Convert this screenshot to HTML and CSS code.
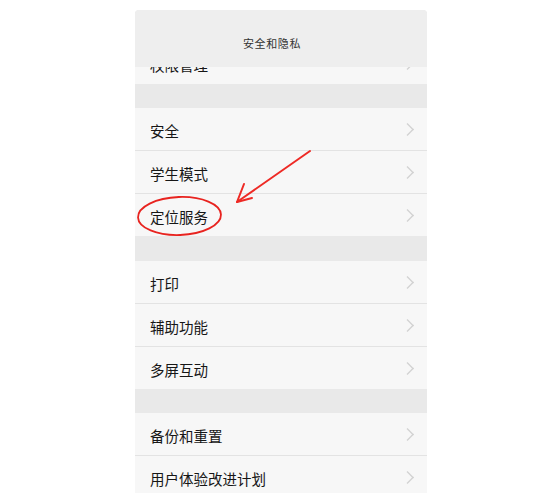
FILE: index.html
```html
<!DOCTYPE html>
<html lang="zh-CN">
<head>
    <meta charset="UTF-8">
    <meta name="viewport" content="width=device-width, initial-scale=1.0">
    <title>安全和隐私</title>
    <link rel="stylesheet" href="styles.css">
</head>
<body>

    <div class="stage">
        <div class="phone">
            <header class="top-bar">
                <h1 class="top-title">安全和隐私</h1>
            </header>

            <div class="settings">
                <section class="group">
                    <div class="row">权限管理<span class="chev"></span></div>
                </section>

                <section class="group">
                    <div class="row">安全<span class="chev"></span></div>
                    <div class="row">学生模式<span class="chev"></span></div>
                    <div class="row">定位服务<span class="chev"></span></div>
                </section>

                <section class="group">
                    <div class="row">打印<span class="chev"></span></div>
                    <div class="row">辅助功能<span class="chev"></span></div>
                    <div class="row">多屏互动<span class="chev"></span></div>
                </section>

                <section class="group">
                    <div class="row">备份和重置<span class="chev"></span></div>
                    <div class="row">用户体验改进计划<span class="chev"></span></div>
                </section>
            </div>
        </div>

        <!-- red pen marks drawn over the screenshot -->
        <svg class="marks" viewBox="0 0 554 501" width="554" height="501">
            <ellipse cx="179.5" cy="216" rx="41.5" ry="19" fill="none" stroke="#e8231f" stroke-width="1.8" transform="rotate(-2 179.5 216)"/>
            <path d="M310 151 L237 202" fill="none" stroke="#ee2a25" stroke-width="2" stroke-linecap="round"/>
            <path d="M244 184 L237 202 L252 198" fill="none" stroke="#ee2a25" stroke-width="2" stroke-linecap="round" stroke-linejoin="round"/>
        </svg>
    </div>

</body>
</html>
```

FILE: styles.css
```css
body {
    margin: 0;
    background-color: #ffffff;
    font-family: "Noto Sans CJK SC", "Noto Sans", sans-serif;
    color: #161616;
}

.stage {
    position: relative;
    width: 554px;
    height: 501px;
    overflow: hidden;
}

.phone {
    margin: 10px 0 0 135px;
    width: 292px;
    height: 483px;
    background-color: #e9e9e9;
    border-radius: 4px 4px 0 0;
    overflow: hidden;
}

.top-bar {
    position: relative;
    z-index: 1;
    height: 57px;
    padding: 26px 18px 0 0;
    box-sizing: border-box;
    background-color: #eeeeee;
    text-align: center;
}

.top-title {
    margin: 0;
    font-size: 11px;
    line-height: 14px;
    font-weight: normal;
    letter-spacing: 0.6px;
    color: #333333;
}

.settings {
    margin-top: -25px;
    display: flex;
    flex-direction: column;
    gap: 24px;
}

.group {
    background-color: #f7f7f7;
}

.group:nth-child(3) {
    margin-top: 1px;
}

.row {
    height: 43px;
    padding: 3px 13px 0 15px;
    box-sizing: border-box;
    display: flex;
    align-items: center;
    justify-content: space-between;
    font-size: 14.5px;
    border-bottom: 1px solid #e3e3e3;
}

.row:last-child {
    height: 42px;
    border-bottom: none;
}

.chev {
    width: 6px;
    height: 6px;
    margin-top: -3px;
    margin-right: 3px;
    border-top: 1px solid #d2d2d2;
    border-right: 1px solid #d2d2d2;
    transform: rotate(45deg) scale(1.3, 1.3);
}

.marks {
    position: absolute;
    top: 0;
    left: 0;
}
```
